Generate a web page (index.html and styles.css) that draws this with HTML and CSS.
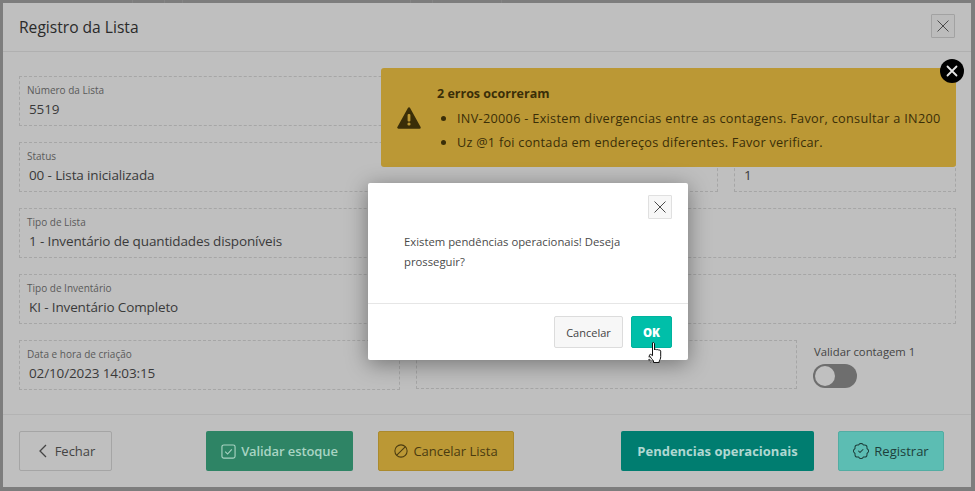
FILE: index.html
```html
<!DOCTYPE html>
<html lang="pt">
<head>
<meta charset="utf-8">
<title>Registro da Lista</title>
<link rel="stylesheet" href="styles.css">
</head>
<body>
<div class="backdrop">
  <section class="panel">
    <header class="panel-head">
      <h1 class="panel-title">Registro da Lista</h1>
      <button class="icon-btn icon-btn-dim" aria-label="Fechar">
        <svg width="16" height="16" viewBox="0 0 16 16"><path class="x-stroke" d="M2.5 2.5l11 11M13.500 2.500l-11 11"/></svg>
      </button>
    </header>
    <div class="panel-body">
      <div class="row">
        <div class="field"><span class="label">Número da Lista</span><span class="value">5519</span></div>
      </div>
      <div class="row row-status">
        <div class="field"><span class="label">Status</span><span class="value">00 - Lista inicializada</span></div>
        <div class="field"><span class="label">&nbsp;</span><span class="value">1</span></div>
      </div>
      <div class="row">
        <div class="field"><span class="label">Tipo de Lista</span><span class="value">1 - Inventário de quantidades disponíveis</span></div>
      </div>
      <div class="row">
        <div class="field"><span class="label">Tipo de Inventário</span><span class="value">KI - Inventário Completo</span></div>
      </div>
      <div class="row row-last">
        <div class="field"><span class="label">Data e hora de criação</span><span class="value">02/10/2023 14:03:15</span></div>
        <div class="field field-empty"></div>
        <div class="toggle-box">
          <span class="toggle-label">Validar contagem 1</span>
          <span class="toggle"><span class="toggle-knob"></span></span>
        </div>
      </div>
    </div>
    <footer class="panel-foot">
      <button class="btn btn-close">
        <svg width="14" height="16" viewBox="0 0 14 16"><path class="chev" d="M10 2L4 8l6 6"/></svg>
        Fechar
      </button>
      <button class="btn btn-stock">
        <svg width="15" height="15" viewBox="0 0 16 16"><rect class="ico-line" x="1" y="1" width="14" height="14" rx="2"/><path class="ico-line" d="M4.500 8.200l2.500 2.500 4.500-5"/></svg>
        Validar estoque
      </button>
      <button class="btn btn-cancel">
        <svg width="14" height="14" viewBox="0 0 16 16"><circle class="ico-line" cx="8" cy="8" r="7"/><path class="ico-line" d="M3.200 12.800L12.800 3.200"/></svg>
        Cancelar Lista
      </button>
      <button class="btn btn-pend">Pendencias operacionais</button>
      <button class="btn btn-reg">
        <svg width="16" height="16" viewBox="0 0 16 16" fill="currentColor"><path d="M10.354 6.146a.5.5 0 0 1 0 .708l-3 3a.5.5 0 0 1-.708 0l-1.500-1.500a.5.5 0 1 1 .708-.708L7 8.793l2.646-2.647a.5.5 0 0 1 .708 0z"/><path d="m10.273 2.513-.921-.944.715-.698.622.637.89-.011a2.890 2.890 0 0 1 2.924 2.924l-.01.89.636.622a2.890 2.890 0 0 1 0 4.134l-.637.622.011.89a2.890 2.890 0 0 1-2.924 2.924l-.89-.01-.622.636a2.890 2.890 0 0 1-4.134 0l-.622-.637-.89.011a2.890 2.890 0 0 1-2.924-2.924l.01-.89-.636-.622a2.890 2.890 0 0 1 0-4.134l.637-.622-.011-.89a2.890 2.890 0 0 1 2.924-2.924l.89.01.622-.636a2.890 2.890 0 0 1 4.134 0l-.715.698a1.890 1.890 0 0 0-2.704 0l-.92.944-1.320-.016a1.890 1.890 0 0 0-1.911 1.912l.016 1.318-.944.921a1.890 1.890 0 0 0 0 2.704l.944.92-.016 1.320a1.890 1.890 0 0 0 1.912 1.911l1.318-.016.921.944a1.890 1.890 0 0 0 2.704 0l.92-.944 1.320.016a1.890 1.890 0 0 0 1.911-1.912l-.016-1.318.944-.921a1.890 1.890 0 0 0 0-2.704l-.944-.92.016-1.320a1.890 1.890 0 0 0-1.912-1.911l-1.318.016z"/></svg>
        Registrar
      </button>
    </footer>
  </section>

  <aside class="alert">
    <svg class="alert-icon" width="24" height="24" viewBox="0 0 24 24"><path class="tri" d="M12 2.500L1.500 21.500h21z"/><rect class="tri-mark" x="10.600" y="8" width="2.800" height="7.500" rx="1"/><circle class="tri-mark" cx="12" cy="18" r="1.600"/></svg>
    <div class="alert-text">
      <strong class="alert-title">2 erros ocorreram</strong>
      <ul class="alert-list">
        <li>INV-20006 - Existem divergencias entre as contagens. Favor, consultar a IN200</li>
        <li>Uz @1 foi contada em endereços diferentes. Favor verificar.</li>
      </ul>
    </div>
    <span class="alert-close">
      <svg width="12" height="12" viewBox="0 0 12 12"><path class="alert-x" d="M1.500 1.500l9 9M10.500 1.500l-9 9"/></svg>
    </span>
  </aside>

  <div class="dialog">
    <div class="dialog-head">
      <button class="icon-btn icon-btn-light" aria-label="Fechar">
        <svg width="16" height="16" viewBox="0 0 16 16"><path class="x-stroke" d="M2.500 2.500l11 11M13.500 2.500l-11 11"/></svg>
      </button>
    </div>
    <p class="dialog-text">Existem pendências operacionais! Deseja prosseguir?</p>
    <div class="dialog-foot">
      <button class="dbtn dbtn-cancel">Cancelar</button>
      <button class="dbtn dbtn-ok">OK</button>
    </div>
  </div>

  <svg class="cursor" width="22" height="24" viewBox="0 0 22 24">
    <path class="cur-wait" d="M6 14.500a5.500 5.500 0 0 0 1 7"/>
    <path class="cur-hand" d="M8.500 1.800c.9-.7 2-.2 2 1v6.200c.3-1 2-1 2.300.1.300-.8 1.800-.8 2.100.3.400-.6 1.700-.4 1.800.7v5.400c0 2.300-.8 3.500-1.500 4.500v1.500H9.500v-1.500c-1-1.500-3.500-4-4-5.500-.2-.9.700-1.500 1.500-1l1.500 1.200z"/>
  </svg>
</div>
</body>
</html>
```
FILE: styles.css
```css
* { box-sizing: border-box; }
html, body { margin: 0; height: 100%; overflow: hidden; }
body {
  font-family: "Open Sans", "Noto Sans", sans-serif;
  color: #2b2b2b;
}
button { font-family: inherit; cursor: pointer; }

.backdrop {
  position: relative;
  width: 975px;
  height: 491px;
  padding: 3px 4px 4px 3px;
  background-color: #7d7d7d;
  background-image:
    linear-gradient(#858585, #858585), linear-gradient(#858585, #858585),
    linear-gradient(#858585, #858585), linear-gradient(#858585, #858585),
    linear-gradient(#858585, #858585), linear-gradient(#858585, #858585);
  background-size: 1px 3px;
  background-repeat: no-repeat;
  background-position: 132px 0, 164px 0, 182px 0, 410px 0, 432px 0, 501px 0;
}

.panel {
  height: 484px;
  display: flex;
  flex-direction: column;
  background: #bfbfbf;
}
.panel-head {
  height: 49px;
  flex: none;
  display: flex;
  align-items: center;
  justify-content: space-between;
  padding: 0 16px;
  border-bottom: 1px solid #b0b0b0;
}
.panel-title { margin: 0; font-size: 15.600px; font-weight: 400; color: #2a2a2a; }

.icon-btn {
  width: 24px;
  height: 24px;
  padding: 0;
  display: flex;
  align-items: center;
  justify-content: center;
  border-radius: 1px;
}
.icon-btn-dim { background: #bcbcbc; border: 1px solid #a2a2a2; margin-top: -3px; }
.icon-btn-light { background: #f7f7f7; border: 1px solid #e0e0e0; }
.x-stroke { fill: none; stroke: #4a4a4a; stroke-width: 1; }

.panel-body {
  flex: none;
  height: 363px;
  padding: 24px 15px 0 16px;
  display: flex;
  flex-direction: column;
  gap: 16px;
  border-bottom: 1px solid #b3b3b3;
}
.row { display: flex; gap: 16px; height: 50px; flex: none; }
.row-status .field:last-child { flex: 0 0 222px; }
.field {
  flex: 1;
  min-width: 0;
  border: 1px dashed #a6a6a6;
  padding: 6px 7px 0;
  display: flex;
  flex-direction: column;
}
.field-empty { flex: 0 0 381px; height: 49px; }
.row-last .field:first-child { flex: 0 0 381px; }
.label { font-size: 10px; line-height: 14px; color: #5a5a5a; }
.value {
  font-size: 13.500px;
  line-height: 20px;
  color: #3a3a3a;
  margin-top: 2px;
  padding-left: 2px;
  letter-spacing: -.13px;
}

.toggle-box { flex: 1; display: flex; flex-direction: column; gap: 5px; padding: 4px 0 0 1px; }
.toggle-label { font-size: 11.300px; line-height: 15px; color: #444; }
.toggle {
  width: 44px;
  height: 24px;
  margin-left: -1px;
  border-radius: 12px;
  background: #6e6e6e;
  padding: 2px;
  display: block;
}
.toggle-knob { display: block; width: 20px; height: 20px; border-radius: 50%; background: #c0c0c0; }

.panel-foot {
  flex: 1;
  display: flex;
  align-items: flex-start;
  padding: 16px 0 0 16px;
}
.btn {
  height: 40px;
  display: flex;
  align-items: center;
  justify-content: center;
  gap: 5px;
  font-size: 13px;
  border-radius: 2px;
  border: 1px solid transparent;
  padding: 0;
  flex: none;
}
.ico-line { fill: none; stroke: currentColor; stroke-width: 1.200; }
.chev { fill: none; stroke: currentColor; stroke-width: 1.300; }
.btn-close { width: 93px; background: #bfbfbf; border-color: #a5a5a5; color: #444; }
.btn-stock { width: 147px; margin-left: 94px; background: #2e8465; color: #a9d4c3; font-weight: 600; letter-spacing: -.1px; }
.btn-cancel { width: 136px; margin-left: 25px; background: #bb9835; border-color: #ab8a2c; color: #4a3b10; }
.btn-pend { width: 193px; margin-left: 107px; background: #007d70; color: #b0d8d2; font-weight: 700; }
.btn-reg { width: 106px; margin-left: 24px; background: #5cbdb3; border-color: #52ada3; color: #1d3f3b; }

.alert {
  position: absolute;
  left: 381px;
  top: 68px;
  width: 575px;
  height: 99px;
  display: flex;
  align-items: center;
  padding: 0 0 0 16px;
  background: #bb9835;
  border-radius: 3px;
  color: #3a2e08;
}
.alert-icon { flex: none; }
.alert-text { margin-left: 16px; line-height: 24px; }
.alert-title { display: block; font-weight: 700; font-size: 12.500px; }
.alert-list { margin: 0; padding: 0 0 0 20px; font-size: 12.700px; letter-spacing: .25px; }
.alert-list li:first-child { letter-spacing: .3px; white-space: nowrap; }
.alert-close {
  position: absolute;
  right: -8px;
  top: -9px;
  width: 24px;
  height: 24px;
  border-radius: 50%;
  background: #000;
  display: flex;
  align-items: center;
  justify-content: center;
}
.alert-x { fill: none; stroke: #e6e6e6; stroke-width: 1.800; stroke-linecap: round; }
.tri { fill: #3a2e08; stroke: #3a2e08; stroke-width: 2.500; stroke-linejoin: round; }
.tri-mark { fill: #bb9835; }

.dialog {
  position: absolute;
  left: 368px;
  top: 183px;
  width: 320px;
  height: 177px;
  background: #fff;
  border-radius: 2px;
  box-shadow: 0 4px 22px rgba(0,0,0,.4);
  display: flex;
  flex-direction: column;
}
.dialog-head { height: 49px; flex: none; display: flex; justify-content: flex-end; padding: 12px 16px 0 0; }
.dialog-text {
  margin: 0;
  padding: 0 36px;
  height: 72px;
  flex: none;
  font-size: 11.300px;
  line-height: 20px;
  color: #4a4a4a;
  border-bottom: 1px solid #e6e6e6;
}
.dialog-foot { flex: 1; display: flex; justify-content: flex-end; align-items: flex-start; gap: 8px; padding: 12px 16px 0 0; }
.dbtn { height: 32px; border-radius: 2px; font-size: 11px; padding: 0; }
.dbtn-cancel { width: 69px; background: #f7f7f7; border: 1px solid #dcdcdc; color: #444; }
.dbtn-ok { width: 41px; background: #00bfa9; border: 1px solid #00b39e; color: #fff; font-weight: 800; font-size: 11.500px; }

.cursor { position: absolute; left: 644px; top: 341px; }
.cur-hand { fill: #fff; stroke: #111; stroke-width: 1; stroke-linejoin: round; }
.cur-wait { fill: none; stroke: #555; stroke-width: 2; stroke-dasharray: 2 1.500; }
```
